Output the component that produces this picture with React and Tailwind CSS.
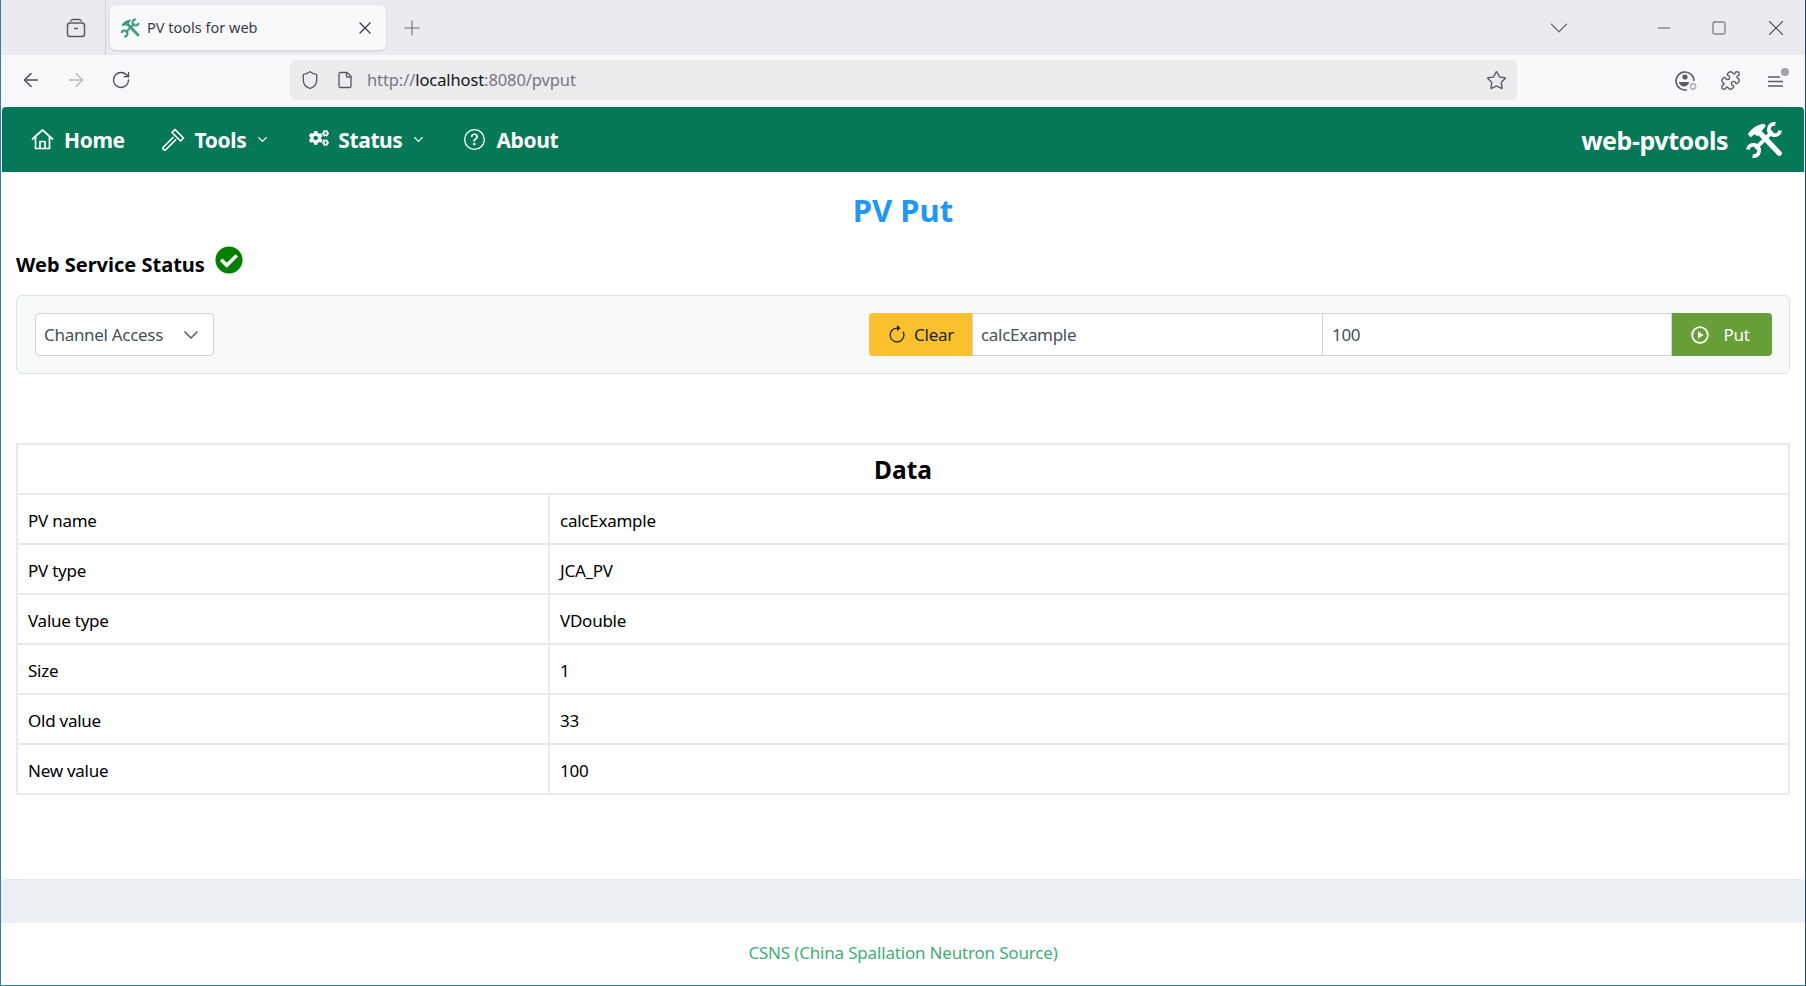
import { ArrowLeft, ArrowRight, RotateCw, Shield, File, Star, Puzzle, ChevronDown, X, Plus, Minus, Square } from "lucide-react";
import { BsQuestionCircle, BsArrowClockwise } from "react-icons/bs";
import { FaCogs, FaCheckCircle } from "react-icons/fa";

function TabsIcon() {
  return (
    <svg width="20" height="20" viewBox="0 0 20 20" fill="none" stroke="#5b5b66" strokeWidth="1.5">
      <path d="M4.500 3.500C5 2 6 1.500 7 1.500h6c1 0 2 .5 2.500 2" />
      <rect x="1.500" y="5" width="17" height="13.500" rx="2.500" />
      <path d="M8 10.500h4" />
    </svg>
  );
}

function ProfileIcon() {
  return (
    <svg width="24" height="24" viewBox="0 0 24 24" fill="none" stroke="#5b5b66" strokeWidth="1.6">
      <path d="M20 13a9 9 0 1 0-7 8.800" />
      <circle cx="11" cy="9" r="2.600" fill="#5b5b66" stroke="none" />
      <path d="M4.500 14h11c-1 2.500-3 4.500-5.500 4.500S5.500 16.500 4.500 14z" fill="#5b5b66" stroke="none" />
      <circle cx="19" cy="18.500" r="2.600" stroke="#b4b4b9" />
    </svg>
  );
}

function MenuIcon() {
  return (
    <div className="relative w-6 h-6">
      <svg width="24" height="24" viewBox="0 0 24 24" fill="none" stroke="#5b5b66" strokeWidth="1.5">
        <path d="M3 9h12M3 13.500h15M3 18h15" />
      </svg>
      <div className="absolute top-0 right-0 w-2 h-2 rounded-full bg-[#a0a0a6]" />
    </div>
  );
}

function HomeIcon() {
  return (
    <svg width="23" height="23" viewBox="0 0 23 23" fill="none" stroke="currentColor" strokeWidth="1.700" strokeLinejoin="round" strokeLinecap="round" className="mr-[10px]">
      <path d="M1.500 11 11.500 2l10 9" />
      <path d="M4.500 9v11.500h14V9" />
      <path d="M9 20.500v-7h5v7" />
    </svg>
  );
}

function HammerIcon() {
  return (
    <svg width="24" height="24" viewBox="0 0 24 24" fill="none" stroke="currentColor" strokeWidth="1.700" strokeLinejoin="round" className="mr-[10px]">
      <path d="M14 1.500 22.500 10l-3 3-8.500-8.500z" />
      <path d="M12.500 9 2.500 19a1.700 1.700 0 0 0 0 2.500 1.700 1.700 0 0 0 2.500 0L15 11.500" />
    </svg>
  );
}

// crossed hammer and double ended wrench
function ToolsIcon({ size, className }) {
  return (
    <svg width={size} height={size} viewBox="0 0 40 40" fill="none" stroke="currentColor" className={className}>
      <path d="M11 29 29 11" strokeWidth="4" />
      <path d="M32 3A6 6 0 1 0 37 10" strokeWidth="4" />
      <path d="M8 37A6 6 0 1 0 3 30" strokeWidth="4" />
      <path d="M16 13 36 34" strokeWidth="5.500" strokeLinecap="round" />
      <path d="M3 14C7 8 12 4 20 3l2 2-3 4-6 7-3-2-4 3z" fill="currentColor" stroke="none" />
    </svg>
  );
}

function PlayIcon() {
  return (
    <svg width="18" height="18" viewBox="0 0 18 18" className="mr-[14px]">
      <circle cx="9" cy="9" r="7.800" fill="none" stroke="currentColor" strokeWidth="1.800" />
      <path d="M7 5.200v7.600L12.500 9z" fill="currentColor" />
    </svg>
  );
}

function BrowserChrome() {
  return (
    <div className="shrink-0">
      <div className="h-[55px] bg-[#ebebef] flex items-stretch">
        <div className="w-[105px] flex items-center justify-end pr-[19px] border-r border-[#d0d0d6] h-[55px]">
          <TabsIcon />
        </div>
        <div className="ml-1 mt-[5px] w-[276px] h-[45px] bg-[#f9f9fb] rounded-md shadow flex items-center pl-[10px] pr-[11px] text-[#3b3b45] text-[14.5px]">
          <ToolsIcon size={20} className="text-[#3f9c80] mr-[7px] shrink-0" />
          <span className="flex-1">PV tools for web</span>
          <X size={20} strokeWidth={1.5} className="text-[#3b3b45]" />
        </div>
        <div className="ml-[14px] flex items-center">
          <Plus size={24} strokeWidth={1.1} className="text-[#6b6b73]" />
        </div>
        <div className="ml-auto flex items-center text-[#4a4a52]">
          <ChevronDown size={30} strokeWidth={1} className="text-[#6b6b73] mr-[80px]" />
          <Minus size={20} strokeWidth={1.1} className="mr-[37px]" />
          <Square size={16} strokeWidth={1.4} className="mr-[36px]" />
          <X size={26} strokeWidth={1} className="mr-[16px]" />
        </div>
      </div>
      <div className="h-[50px] bg-[#f9f9fb] flex items-center">
        <ArrowLeft size={22} strokeWidth={1.6} className="ml-[19px] text-[#4a4a52]" />
        <ArrowRight size={22} strokeWidth={1.6} className="ml-[23px] text-[#b8b8bd]" />
        <RotateCw size={20} strokeWidth={1.6} className="ml-[24px] text-[#4a4a52]" />
        <div className="ml-[159px] w-[1227px] h-10 bg-[#ececef] rounded-md flex items-center px-[10px] text-[16.5px] tracking-[-0.1px]">
          <Shield size={20} strokeWidth={1.6} className="text-[#5b5b66]" />
          <File size={18} strokeWidth={1.8} className="ml-[16px] text-[#5b5b66]" />
          <span className="ml-[13px] mt-px text-[#77777d]">
            http://<span className="text-[#15141a]">localhost</span>:8080/pvput
          </span>
          <Star size={21} strokeWidth={1.6} className="ml-auto text-[#5b5b66]" />
        </div>
        <div className="ml-[157px]"><ProfileIcon /></div>
        <Puzzle size={21} strokeWidth={1.6} className="ml-[22px] text-[#5b5b66]" />
        <div className="ml-[24px]"><MenuIcon /></div>
      </div>
    </div>
  );
}

function NavItem({ icon, label, caret }) {
  return (
    <div className="flex items-center text-[21px] font-bold tracking-[-0.4px] text-white">
      {icon}
      <span className="mt-[2px]">{label}</span>
      {caret && <ChevronDown size={15} strokeWidth={2.2} className="ml-[9px]" />}
    </div>
  );
}

function Navbar() {
  return (
    <div className="h-[65px] mt-[2px] mx-[1px] bg-[#057857] rounded-t-sm flex items-center pl-[29px] pr-[21px] shrink-0">
      <NavItem icon={<HomeIcon />} label="Home" />
      <div className="ml-[36px]">
        <NavItem icon={<HammerIcon />} label="Tools" caret />
      </div>
      <div className="ml-[39px]">
        <NavItem icon={<FaCogs size={20} className="mr-[9px] -mt-1" />} label="Status" caret />
      </div>
      <div className="ml-[38px]">
        <NavItem icon={<BsQuestionCircle size={21} className="mr-[11px]" />} label="About" />
      </div>
      <div className="ml-auto flex items-center text-white text-[25px] font-bold tracking-[-0.45px]">
        <span className="mt-[2px]">web-pvtools</span>
        <ToolsIcon size={38} className="ml-[17px]" />
      </div>
    </div>
  );
}

const rows = [
  ["PV name", "calcExample"],
  ["PV type", "JCA_PV"],
  ["Value type", "VDouble"],
  ["Size", "1"],
  ["Old value", "33"],
  ["New value", "100"],
];

function DataTable() {
  return (
    <table className="w-full border-collapse border-2 border-[#e9e9ef] table-fixed text-[17px] tracking-[-0.25px] text-black">
      <colgroup>
        <col className="w-[532px]" />
        <col />
      </colgroup>
      <thead>
        <tr className="h-[50px]">
          <th colSpan={2} className="border-2 border-[#e9e9ef] pt-[3px] text-[24.5px] tracking-normal font-bold text-center">Data</th>
        </tr>
      </thead>
      <tbody>
        {rows.map((r) => (
          <tr key={r[0]} className="h-[50px]">
            <td className="border-2 border-[#e9e9ef] pt-[3px] pl-[10px]">{r[0]}</td>
            <td className="border-2 border-[#e9e9ef] pt-[3px] pl-[10px]">{r[1]}</td>
          </tr>
        ))}
      </tbody>
    </table>
  );
}

export default function App() {
  return (
    <div className="h-[986px] w-full overflow-hidden flex flex-col bg-white border-x border-b border-x-[#2f7fb0] border-b-[#2f7fb0] border-r-[#1f4a6b] font-['Noto_Sans','Open_Sans',sans-serif]">
      <BrowserChrome />
      <Navbar />
      <div className="h-[708px] bg-white rounded-b-md border-b border-[#e2e6ee] px-[15px] flex flex-col shrink-0">
        <h1 className="mt-[16px] text-center text-[31px] leading-[44px] font-bold text-[#2196f3]">PV Put</h1>
        <div className="mt-[10px] h-[42px] flex items-center">
          <span className="text-[20px] font-bold text-black mt-[3px]">Web Service Status</span>
          <FaCheckCircle size={28} className="ml-[10px] -mt-[6px] text-[#008000]" />
        </div>
        <div className="mt-[11px] h-[79px] bg-[#f8f9fa] border border-[#dee2e6] rounded-md flex items-center justify-between pl-[18px] pr-[17px] text-[17px] tracking-[-0.3px]">
          <div className="w-[179px] h-[43px] bg-white border border-[#ced4da] rounded flex items-center justify-between pl-[8px] pr-[10px] text-[#495057]">
            <span>Channel Access</span>
            <ChevronDown size={24} strokeWidth={1.75} className="text-[#5f6670]" />
          </div>
          <div className="flex h-[43px] w-[903px]">
            <button className="w-[103px] bg-[#fbc02d] rounded-l flex items-center justify-center text-[#212529]">
              <BsArrowClockwise size={20} className="mr-[7px]" />
              Clear
            </button>
            <div className="w-[351px] border border-[#ced4da] bg-white flex items-center pl-[8px] text-[#495057]">calcExample</div>
            <div className="flex-1 border border-l-0 border-[#ced4da] bg-white flex items-center pl-[9px] text-[#495057]">100</div>
            <button className="w-[100px] pr-[3px] bg-[#689f38] rounded-r flex items-center justify-center text-white">
              <PlayIcon />
              Put
            </button>
          </div>
        </div>
        <div className="mt-[69px]">
          <DataTable />
        </div>
      </div>
      <div className="h-[43px] bg-[#ecf0f5] shrink-0" />
      <div className="flex-1 flex items-center justify-center text-[17px] tracking-[-0.18px] text-[#3fae78] pb-[3px]">
        CSNS (China Spallation Neutron Source)
      </div>
    </div>
  );
}
